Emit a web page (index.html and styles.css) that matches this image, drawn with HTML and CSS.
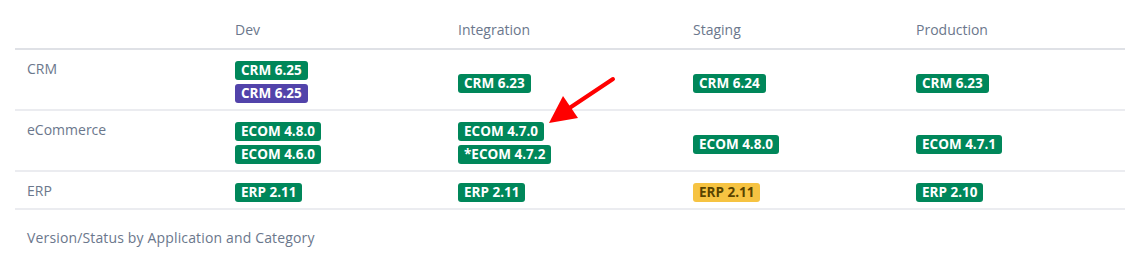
FILE: index.html
```html
<!DOCTYPE html>
<html>
<head>
<meta charset="utf-8">
<link rel="stylesheet" href="styles.css">
</head>
<body>
<div class="page">
  <table class="matrix">
    <colgroup>
      <col class="c-label">
      <col class="c-dev">
      <col class="c-int">
      <col class="c-stg">
      <col class="c-prod">
    </colgroup>
    <thead>
      <tr>
        <th></th>
        <th>Dev</th>
        <th>Integration</th>
        <th>Staging</th>
        <th>Production</th>
      </tr>
    </thead>
    <tbody>
      <tr>
        <td class="label">CRM</td>
        <td><div class="stack"><span class="loz green">CRM 6.25</span><span class="loz purple">CRM 6.25</span></div></td>
        <td class="mid"><span class="loz green">CRM 6.23</span></td>
        <td class="mid"><span class="loz green">CRM 6.24</span></td>
        <td class="mid"><span class="loz green">CRM 6.23</span></td>
      </tr>
      <tr>
        <td class="label">eCommerce</td>
        <td><div class="stack"><span class="loz green">ECOM 4.8.0</span><span class="loz green">ECOM 4.6.0</span></div></td>
        <td><div class="stack"><span class="loz green">ECOM 4.7.0</span><span class="loz green">*ECOM 4.7.2</span></div></td>
        <td class="mid"><span class="loz green">ECOM 4.8.0</span></td>
        <td class="mid"><span class="loz green">ECOM 4.7.1</span></td>
      </tr>
      <tr>
        <td class="label">ERP</td>
        <td><span class="loz green">ERP 2.11</span></td>
        <td><span class="loz green">ERP 2.11</span></td>
        <td><span class="loz yellow">ERP 2.11</span></td>
        <td><span class="loz green">ERP 2.10</span></td>
      </tr>
    </tbody>
  </table>
  <p class="caption">Version/Status by Application and Category</p>
  <svg class="arrow" width="1138" height="258" viewBox="0 0 1138 258">
    <line x1="613" y1="79" x2="568" y2="109" stroke="#ff0000" stroke-width="4" stroke-linecap="round"/>
    <polygon points="549,123 563,96 578,118" fill="#ff0000"/>
  </svg>
</div>
</body>
</html>
```

FILE: styles.css
```css
html, body {
  margin: 0;
  padding: 0;
  background: #ffffff;
}

body {
  font-family: "Open Sans", "Noto Sans", "Liberation Sans", sans-serif;
  font-size: 14px;
  color: #6b778c;
}

.page {
  position: relative;
  width: 1138px;
  height: 258px;
  padding: 8px 13px 0 15px;
  box-sizing: border-box;
}

.matrix {
  width: 1110px;
  border-collapse: collapse;
  table-layout: fixed;
}

.c-label { width: 210px; }
.c-dev { width: 223px; }
.c-int { width: 235px; }
.c-stg { width: 223px; }
.c-prod { width: 219px; }

.matrix th {
  font-weight: 400;
  text-align: left;
  line-height: 20px;
  padding: 12px 10px 8px;
  color: #6b778c;
  border-bottom: 2px solid #dfe1e6;
}

.matrix td {
  padding: 11px 10px 6px;
  border-bottom: 2px solid #ebecf0;
  vertical-align: top;
  line-height: 19px;
}

.matrix td.label {
  padding-left: 12px;
  padding-top: 9px;
  line-height: 20px;
  color: #6b778c;
}

.matrix td.mid {
  vertical-align: middle;
  padding-top: 14px;
}

.stack {
  display: flex;
  flex-direction: column;
  align-items: flex-start;
  gap: 4px;
}

.loz {
  display: inline-block;
  height: 19px;
  line-height: 19px;
  padding: 0 6px;
  border-radius: 3px;
  font-size: 13.5px;
  font-weight: 700;
  color: #ffffff;
  white-space: nowrap;
  vertical-align: top;
}

.green { background: #00875a; }
.purple { background: #5243aa; }
.yellow { background: #f6c342; color: #594300; }

.caption {
  margin: 18px 0 0 12px;
  line-height: 20px;
  letter-spacing: 0.15px;
  color: #6b778c;
}

.arrow {
  position: absolute;
  left: 0;
  top: 0;
  pointer-events: none;
}
```
